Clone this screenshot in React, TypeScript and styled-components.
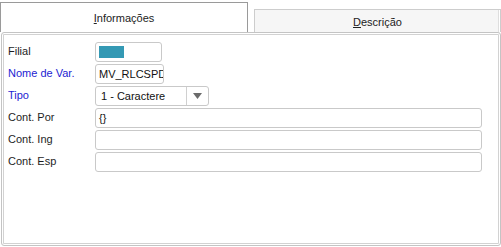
import React from "react";
import styled, { createGlobalStyle } from "styled-components";

const Global = createGlobalStyle`
  html, body { margin: 0; padding: 0; background: #ffffff; }
  body { font-family: "Liberation Sans", Arial, sans-serif; font-size: 11px; color: #222; }
`;

const Frame = styled.div`
  width: 501px;
  height: 247px;
  display: flex;
  flex-direction: column;
  box-sizing: border-box;
`;

const TabBar = styled.div`
  display: flex;
  align-items: flex-end;
  height: 32px;
  gap: 6px;
  flex-shrink: 0;
`;

const Tab = styled.div<{ $active?: boolean }>`
  box-sizing: border-box;
  width: ${(p) => (p.$active ? "248px" : "247px")};
  height: ${(p) => (p.$active ? "30px" : "23px")};
  display: flex;
  align-items: center;
  justify-content: center;
  border: 1px solid ${(p) => (p.$active ? "#9a9a9a" : "#cdcdcd")};
  border-bottom: none;
  background: ${(p) => (p.$active ? "#ffffff" : "#f6f6f6")};
  color: #222;
  font-size: 11px;
  padding-top: ${(p) => (p.$active ? "0" : "1px")};
  box-shadow: ${(p) => (p.$active ? "none" : "inset -1px 0 0 #ffffff, inset -2px 0 0 #dedede")};
`;

const Key = styled.span`
  text-decoration: underline;
`;

const Panel = styled.div`
  flex: 1;
  margin: 0 0 1px 1px;
  box-sizing: border-box;
  border: 1px solid #c4c4c4;
  border-radius: 3px;
  box-shadow: inset 0 0 0 1px #ffffff, inset 0 0 0 2px #d2d2d2;
  background: #ffffff;
  padding: 9px 18px 0 6px;
`;

const Form = styled.div`
  display: grid;
  grid-template-columns: 87px 1fr;
  grid-auto-rows: 20px;
  row-gap: 2px;
  align-items: center;
`;

const Label = styled.div<{ $required?: boolean }>`
  font-size: 11px;
  color: ${(p) => (p.$required ? "#2323d2" : "#1e1e1e")};
  line-height: 20px;
  margin-top: -2px;
`;

const Field = styled.div<{ $width?: string }>`
  box-sizing: border-box;
  width: ${(p) => p.$width || "100%"};
  height: 20px;
  border: 1px solid #c9c9c9;
  border-radius: 3px;
  background: #ffffff;
  display: flex;
  align-items: center;
  padding: 0 3px;
  overflow: hidden;
  white-space: nowrap;
  font-size: 11px;
  color: #111;
`;

const Swatch = styled.div`
  width: 25px;
  height: 12px;
  background: #3499b4;
`;

const Select = styled.div`
  box-sizing: border-box;
  width: 114px;
  height: 20px;
  border: 1px solid #c9c9c9;
  border-radius: 3px;
  background: #ffffff;
  display: flex;
  align-items: stretch;
  font-size: 11px;
  color: #111;
`;

const SelectValue = styled.div`
  flex: 1;
  display: flex;
  align-items: center;
  padding-left: 5px;
  border-right: 1px solid #d0d0d0;
`;

const SelectArrow = styled.div`
  width: 21px;
  display: flex;
  align-items: center;
  justify-content: center;
`;

export default function App() {
  return (
    <>
      <Global />
      <Frame>
        <TabBar>
          <Tab $active>
            <span>
              <Key>I</Key>nformações
            </span>
          </Tab>
          <Tab>
            <span>
              <Key>D</Key>escrição
            </span>
          </Tab>
        </TabBar>
        <Panel>
          <Form>
            <Label>Filial</Label>
            <Field $width="67px">
              <Swatch />
            </Field>
            <Label $required>Nome de Var.</Label>
            <Field $width="69px">MV_RLCSPDIV</Field>
            <Label $required>Tipo</Label>
            <Select>
              <SelectValue>1 - Caractere</SelectValue>
              <SelectArrow>
                <svg width="9" height="6" viewBox="0 0 9 6">
                  <path d="M0 0 H9 L4.5 6 Z" fill="#6b6b6b" />
                </svg>
              </SelectArrow>
            </Select>
            <Label>Cont. Por</Label>
            <Field>{"{}"}</Field>
            <Label>Cont. Ing</Label>
            <Field />
            <Label>Cont. Esp</Label>
            <Field />
          </Form>
        </Panel>
      </Frame>
    </>
  );
}
